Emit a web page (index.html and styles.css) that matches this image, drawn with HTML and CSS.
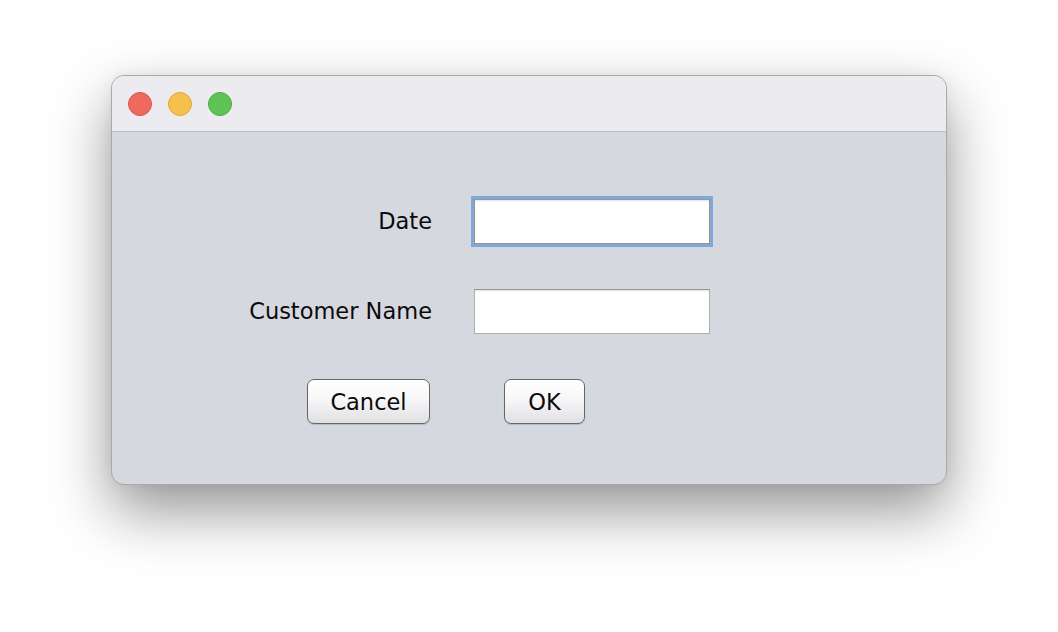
FILE: index.html
```html
<!DOCTYPE html>
<html>
<head>
<meta charset="utf-8">
<link rel="stylesheet" href="styles.css">
</head>
<body>
<div class="window">
  <div class="titlebar">
    <span class="light red"></span>
    <span class="light yellow"></span>
    <span class="light green"></span>
  </div>
  <div class="content">
    <div class="form">
      <label class="label">Date</label>
      <div class="field focused"></div>
      <label class="label">Customer Name</label>
      <div class="field"></div>
    </div>
    <div class="buttons">
      <button class="btn cancel">Cancel</button>
      <button class="btn ok">OK</button>
    </div>
  </div>
</div>
</body>
</html>
```

FILE: styles.css
```css
html, body {
  margin: 0;
  padding: 0;
  background: #ffffff;
}
body {
  width: 1058px;
  height: 632px;
  overflow: hidden;
  padding-top: 75px;
  padding-left: 111px;
  box-sizing: border-box;
  font-family: "DejaVu Sans", sans-serif;
}
.window {
  width: 836px;
  height: 410px;
  box-sizing: border-box;
  border: 1px solid #a9a9ab;
  border-radius: 13px;
  overflow: hidden;
  background: #d6d8df;
  box-shadow: 0 26px 60px rgba(0, 0, 0, 0.42), 0 0 14px rgba(0, 0, 0, 0.06);
  display: flex;
  flex-direction: column;
}
.titlebar {
  height: 56px;
  box-sizing: border-box;
  background: #ebebf0;
  border-bottom: 1px solid #bdbdc0;
  display: flex;
  align-items: center;
  padding-left: 16px;
  gap: 16px;
}
.light {
  width: 24px;
  height: 24px;
  border-radius: 50%;
  box-sizing: border-box;
}
.red { background: #ef6a5e; border: 1px solid #d9544a; }
.yellow { background: #f6c04f; border: 1px solid #dea63a; }
.green { background: #5fc455; border: 1px solid #4aa83f; }
.content {
  flex: 1;
  padding-top: 67px;
}
.form {
  display: grid;
  grid-template-columns: 320px 236px;
  column-gap: 42px;
  row-gap: 45px;
  align-items: center;
}
.label {
  text-align: right;
  font-size: 22.5px;
  color: #0a0a0a;
  line-height: 45px;
}
.field {
  height: 45px;
  box-sizing: border-box;
  background: #ffffff;
  border: 1px solid #b0b0b0;
  border-top-color: #979797;
  box-shadow: inset 0 2px 2px -1px rgba(0,0,0,0.12);
}
.field.focused {
  border: 1px solid #969696;
  box-shadow: 0 0 0 3px #7fa8d6, inset 0 2px 2px -1px rgba(0,0,0,0.12);
}
.buttons {
  display: flex;
  gap: 74px;
  margin-top: 45px;
  padding-left: 195px;
}
.btn {
  height: 45px;
  box-sizing: border-box;
  border: 1px solid #666666;
  border-radius: 7px;
  background: linear-gradient(#ffffff 0%, #f7f7f8 45%, #e0e0e4 100%);
  font-family: "DejaVu Sans", sans-serif;
  font-size: 22.5px;
  color: #0a0a0a;
  padding: 0;
  box-shadow: 0 1px 1px rgba(0,0,0,0.15);
}
.cancel { width: 123px; }
.ok { width: 81px; }
```
